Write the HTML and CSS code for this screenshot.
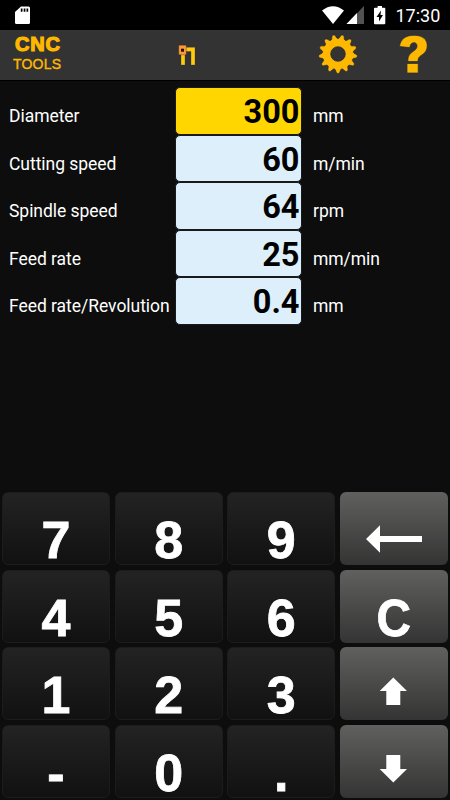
FILE: index.html
```
<!DOCTYPE html>
<html lang="en">
  <head>
    <meta charset="utf-8">
    <link rel="stylesheet" href="styles.css">
    <title>CNC Tools</title>
  </head>
  <body>
    <div class="statusBar">
      <svg class="sdCard" width="16" height="19" viewBox="0 0 16 19">
        <path fill="#fff" d="M6 0.5H13.5Q15 0.5 15 2V16.5Q15 18 13.5 18H1.500Q0 18 0 16.500V6Z" />
        <path fill="#000" d="M5.800 2.500h1.700v3.300h-1.700zM8.700 2.500h1.700v3.300h-1.700zM11.500 2.500h1.700v3.300h-1.700z" />
      </svg>
      <svg class="signal" width="43" height="20" viewBox="0 0 43 20">
        <path fill="#fff" d="M0 4.500Q11 -4.200 22 4.500L11 18Z" />
        <path fill="#525252" d="M42 0V18H24.500Z" />
        <path fill="#fff" d="M35 7V18H24.500Z" />
      </svg>
      <svg class="battery" width="12" height="20" viewBox="0 0 12 20">
        <path fill="#fff" d="M3.600 0H8V1.700H10.200Q11.300 1.700 11.300 2.800V17Q11.300 18.200 10.200 18.200H1.100Q0 18.200 0 17V2.800Q0 1.700 1.100 1.700H3.600Z" />
        <path fill="#000" d="M7 4.500L2.500 11H5V15.500L9 9H6.500Z" />
      </svg>
      <div class="clock">17:30</div>
    </div>
    <div class="toolbar">
      <div class="logo">
        <div class="logoTop">CNC</div>
        <div class="logoBottom">TOOLS</div>
      </div>
      <svg class="turning" width="18" height="22" viewBox="0 0 18 22">
        <path fill="#ffc90e" stroke="#29303c" stroke-width=".3" d="M3 3.300H17V21H13V7.500H7V21H3Z" />
        <path fill="#ff9838" stroke="#0b1030" stroke-width=".3" d="M.700 1.200h7.600v9.600H.700z" />
        <path fill="#22100a" d="M3 4.700h3v3H3z" />
      </svg>
      <svg class="gear" width="40" height="40" viewBox="-20 -20 40 40">
        <g fill="#ffb800" stroke="#252d3c" stroke-width=".8">
          <path id="gearPath" fill-rule="evenodd" />
        </g>
      </svg>
      <svg class="help" width="30" height="40" viewBox="0 0 30 40">
        <path fill="#ffb800" stroke="#252d3c" stroke-width=".7" d="M.500 12.500C1.500 5 7 1.300 15 1.300C23.500 1.300 28.200 5.300 28.200 11.700C28.200 16.500 26 19 22.500 21.300C20 23 19 24 19 27.500H9C8.500 22.500 10.500 20 14.300 17.300C17 15.300 18 14 18 12C18 10 17 8.700 15 8.700C12.500 8.700 11.200 10.300 10.800 13.600ZM8 29.500H19.200V39H8Z" />
      </svg>
    </div>
    <div class="values">
      <div class="row">
        <div class="label">Diameter</div>
        <div class="field active">300</div>
        <div class="unit">mm</div>
      </div>
      <div class="row">
        <div class="label">Cutting speed</div>
        <div class="field">60</div>
        <div class="unit">m/min</div>
      </div>
      <div class="row">
        <div class="label">Spindle speed</div>
        <div class="field">64</div>
        <div class="unit">rpm</div>
      </div>
      <div class="row">
        <div class="label">Feed rate</div>
        <div class="field">25</div>
        <div class="unit">mm/min</div>
      </div>
      <div class="row">
        <div class="label">Feed rate/Revolution</div>
        <div class="field">0.4</div>
        <div class="unit">mm</div>
      </div>
    </div>
    <div class="keypad">
      <div class="key">7</div>
      <div class="key">8</div>
      <div class="key">9</div>
      <div class="key side">
        <svg width="108" height="73" viewBox="0 0 108 73">
          <path d="M26 47L40 33.300V44H82V50H40V60.700Z" />
        </svg>
      </div>
      <div class="key">4</div>
      <div class="key">5</div>
      <div class="key">6</div>
      <div class="key side clear"><span>C</span></div>
      <div class="key">1</div>
      <div class="key">2</div>
      <div class="key">3</div>
      <div class="key side">
        <svg width="108" height="73" viewBox="0 0 108 73">
          <path d="M53.300 30.500L67 44H60.300V58H46.300V44H39.700Z" />
        </svg>
      </div>
      <div class="key">-</div>
      <div class="key">0</div>
      <div class="key">.</div>
      <div class="key side">
        <svg width="108" height="73" viewBox="0 0 108 73">
          <path d="M53.300 57.500L67 44H60.300V30H46.300V44H39.700Z" />
        </svg>
      </div>
    </div>
    <script src="script.js"></script>
  </body>
</html>
```
FILE: styles.css
```
* {
  margin: 0;
  padding: 0;
  box-sizing: border-box;
  user-select: none;
}
body {
  width: 450px;
  height: 800px;
  display: flex;
  flex-direction: column;
  background-color: #0d0d0d;
  color: white;
  font-family: Roboto, sans-serif;
}
svg {
  display: block;
  flex: none;
}
.statusBar {
  height: 30px;
  flex: none;
  display: flex;
  padding: 6px 10px 0 15px;
  background-color: black;
}
.sdCard {
  margin-right: 291px;
}
.battery {
  margin-left: 9px;
}
.clock {
  margin-left: 9.5px;
  font-size: 18px;
  line-height: 20px;
}
.toolbar {
  height: 51px;
  flex: none;
  display: flex;
  background-color: #333;
  border-bottom: 1px solid black;
}
.logo {
  width: 164px;
  padding: 3px 0 0 13px;
  color: #ffb800;
  font-family: "Liberation Sans", Arial, sans-serif;
}
.logoTop {
  font-size: 20px;
  line-height: 22px;
  font-weight: bold;
  letter-spacing: 0.8px;
  -webkit-text-stroke: 1.2px #ffb800;
  padding-left: 2px;
}
.logoBottom {
  font-size: 14px;
  line-height: 18px;
  letter-spacing: 0.2px;
  -webkit-text-stroke: 0.4px #ffb800;
}
.turning {
  margin: 14px 0 0 14px;
}
.gear {
  margin: 4px 0 0 121.5px;
}
.help {
  margin: 4px 0 0 41px;
}
.values {
  flex: 1;
  padding-top: 6px;
}
.row {
  height: 47.5px;
  display: grid;
  grid-template-columns: 166px 127px 1fr;
  padding-left: 9px;
  font-size: 17.5px;
  line-height: 58px;
  letter-spacing: -0.04px;
  white-space: nowrap;
}
.field {
  height: 47.5px;
  padding-right: 1.5px;
  background-color: #dceffb;
  border: 1px solid #17191b;
  border-width: 1px 1px 0.5px;
  border-radius: 5px;
  color: black;
  font-size: 32.5px;
  line-height: 48px;
  letter-spacing: 0;
  font-weight: bold;
  text-align: right;
}
.active {
  background-color: #ffd600;
}
.unit {
  padding-left: 11px;
}
.keypad {
  flex: none;
  display: grid;
  grid-template-columns: repeat(4, 108px);
  grid-auto-rows: 73px;
  gap: 4.6px 4.6px;
  padding: 0 0 2px 2px;
}
.key {
  padding-top: 24px;
  border-radius: 6px;
  border: 1px solid #1c1c1c;
  background: linear-gradient(#232323, #111);
  font-family: "Liberation Sans", Arial, sans-serif;
  font-size: 52px;
  font-weight: bold;
  line-height: 46px;
  text-align: center;
  -webkit-text-stroke: 0.8px white;
}
.side {
  padding-top: 0;
  border: none;
  background: linear-gradient(#60605e, #343434);
}
.side svg {
  fill: white;
}
.clear {
  padding-top: 25px;
}
.clear span {
  display: inline-block;
  transform: scaleX(0.92);
}
```
FILE: script.js
```
// gear outline: 13 rounded teeth, one pointing straight down
const gearPath = document.getElementById("gearPath");
let points = [];
for (let i = 0; i < 260; i++) {
  const angle = (i / 260) * Math.PI * 2;
  const wave = Math.cos(13 * (angle - Math.PI / 2));
  const r = 17.5 + 2.3 * Math.tanh(1.3 * wave);
  points.push(
    (r * Math.cos(angle)).toFixed(2) + " " + (r * Math.sin(angle)).toFixed(2)
  );
}
gearPath.setAttribute(
  "d",
  "M" + points.join("L") + "ZM7.3 0A7.3 7.3 0 1 0 -7.3 0A7.3 7.3 0 1 0 7.3 0Z"
);
```
